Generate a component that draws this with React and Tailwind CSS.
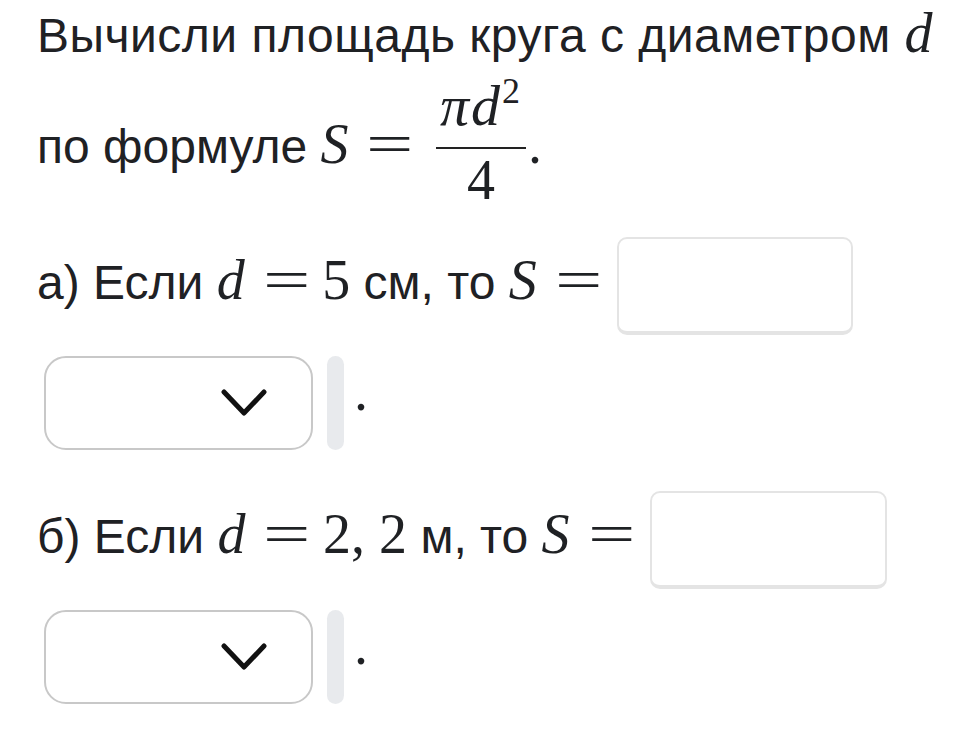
import React from 'react';

const serif = "font-['Liberation_Serif',serif]";

const M = ({ children, i = false }) => (
  <span className={`${serif} text-[56px] ${i ? 'italic' : 'not-italic'}`}>{children}</span>
);

const Eq = () => (
  <span className={`${serif} inline-block text-[56px] ml-[26px] mr-[20px] scale-x-[1.5]`}>=</span>
);

const AnswerBox = ({ width }) => (
  <span
    className={`inline-block align-middle ml-[3px] h-[98px] rounded-[10px] border-2 border-b-4 border-[#e4e4e4] bg-white ${width}`}
  />
);

const Chevron = () => (
  <svg width="46" height="28" viewBox="0 0 46 28" fill="none">
    <polyline
      points="3,3 23,24 43,3"
      stroke="#111"
      strokeWidth="5"
      strokeLinecap="round"
      strokeLinejoin="round"
    />
  </svg>
);

const UnitSelect = () => (
  <div className="ml-[7px] flex items-center">
    <div className="w-[269px] h-[94px] rounded-[22px] border-2 border-[#c8c8c8] bg-white flex items-center justify-end pr-[44px]">
      <Chevron />
    </div>
    <div className="ml-[14px] w-[17px] h-[94px] rounded-full bg-[#e8eaed]" />
    <span className={`${serif} ml-[10px] mb-[24px] text-[56px] leading-none`}>.</span>
  </div>
);

const Fraction = () => (
  <span className="inline-flex flex-col items-center align-[38px] ml-[10px] mr-[2px]">
    <span className={`${serif} h-[56px] leading-[56px] text-[58px] px-[4px] tracking-[2px]`}>
      <span className="italic">πd</span>
      <span className="relative top-[-22px] not-italic text-[36px] leading-none">2</span>
    </span>
    <span className="mt-[13px] w-full h-[2px] bg-[#222]" />
    <span className={`${serif} mt-[3px] h-[56px] leading-[56px] text-[56px]`}>4</span>
  </span>
);

export default function App() {
  return (
    <div className="min-h-screen bg-white text-[#1f2124] font-['Liberation_Sans',sans-serif] text-[48px] pl-[37px]">
      <div className="leading-[66px] whitespace-nowrap tracking-[0.5px]">
        Вычисли площадь круга с диаметром <M i>d</M>
      </div>

      <div className="mt-[9px] leading-[48px] whitespace-nowrap">
        по формуле <M i>S</M>
        <Eq />
        <Fraction />
        <M>.</M>
      </div>

      <div className="mt-[29px] leading-[48px] whitespace-nowrap">
        а) Если <M i>d</M>
        <Eq />
        <M>5</M> см, то <M i>S</M>
        <Eq />
        <AnswerBox width="w-[236px]" />
      </div>

      <div className="mt-[21px]">
        <UnitSelect />
      </div>

      <div className="mt-[41px] leading-[48px] whitespace-nowrap">
        б) Если <M i>d</M>
        <Eq />
        <M>2, 2</M> м, то <M i>S</M>
        <Eq />
        <AnswerBox width="w-[237px]" />
      </div>

      <div className="mt-[21px]">
        <UnitSelect />
      </div>
    </div>
  );
}
